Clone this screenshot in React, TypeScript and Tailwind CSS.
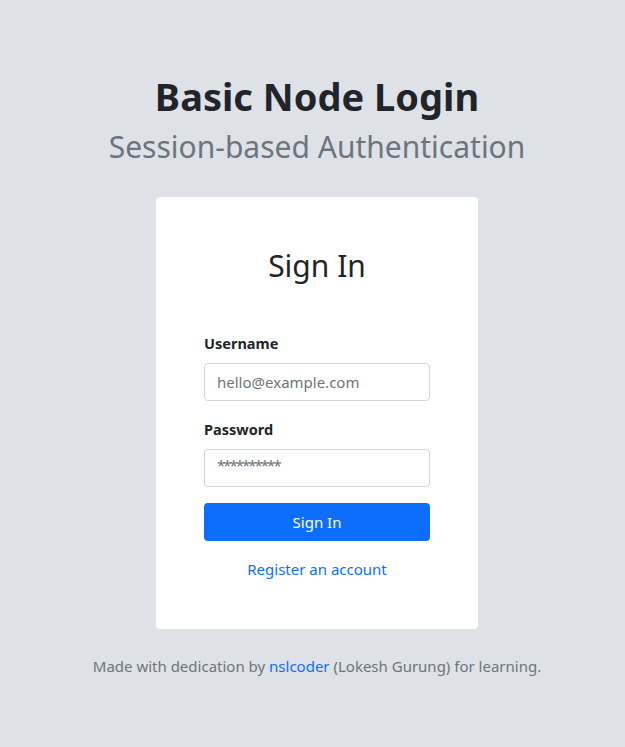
const App = () => {
    return (
        <main className="min-h-[747px] w-full bg-[#dee2e6] font-['Noto_Sans',sans-serif] text-[#212529] flex flex-col items-center pl-[9px] pt-[72px]">
            {/* header */}
            <h1 className="text-[38px] leading-[48px] font-bold">Basic Node Login</h1>
            <h2 className="mt-2 text-[30px] leading-[38px] text-[#6c757d]">Session-based Authentication</h2>

            {/* login card */}
            <div className="mt-[31px] w-[322px] bg-white rounded-[4px] px-12 pt-[50px] pb-12 flex flex-col">
                <h3 className="text-center text-[30px] leading-[38px] font-[400]">Sign In</h3>

                <form className="mt-[46px] flex flex-col">
                    <label className="text-[14.5px] leading-6 font-bold">Username</label>
                    <input
                        type="text"
                        placeholder="hello@example.com"
                        className="mt-2 h-[38px] w-full rounded-[4px] border border-[#ced4da] px-3 text-[15px] text-[#212529] placeholder:text-[#6c757d] outline-none"
                    />

                    <label className="mt-4 text-[14.5px] leading-6 font-bold">Password</label>
                    <input
                        type="password"
                        placeholder="**********"
                        className="mt-2 h-[38px] w-full rounded-[4px] border border-[#ced4da] px-3 pb-[6px] text-[15px] tracking-[-2px] text-[#212529] placeholder:text-[#6c757d] outline-none"
                    />

                    <button type="button" className="mt-4 h-[38px] w-full rounded-[4px] bg-[#0d6efd] text-white text-[15px]">
                        Sign In
                    </button>

                    <a href="#" className="mt-4 text-center text-[15px] leading-6 text-[#0d6efd]">Register an account</a>
                </form>
            </div>

            {/* footer */}
            <p className="mt-[25px] text-[15px] leading-6 text-[#6c757d]">
                Made with dedication by <a href="#" className="text-[#0d6efd]">nslcoder</a> (Lokesh Gurung) for learning.
            </p>
        </main>
    )
}

export default App
